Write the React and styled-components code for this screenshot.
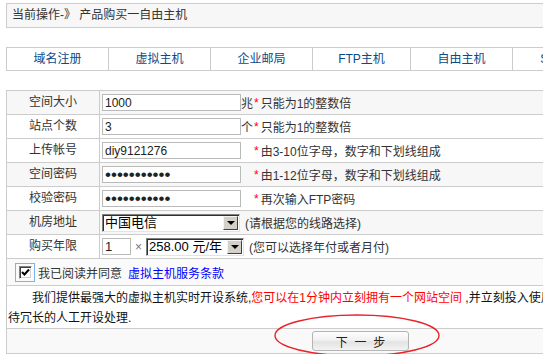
import React from 'react';
import styled, { createGlobalStyle } from 'styled-components';

const FONT = `"Liberation Sans", "Noto Sans CJK SC", sans-serif`;

const GlobalStyle = createGlobalStyle`
    html, body {
        margin: 0;
        padding: 0;
        overflow: hidden;
        background: #fff;
    }
    body {
        font-family: ${FONT};
        font-size: 12px;
        color: #333;
    }
`;

const tabs = [
    { name: '域名注册', width: 101 },
    { name: '虚拟主机', width: 102 },
    { name: '企业邮局', width: 102 },
    { name: 'FTP主机', width: 98 },
    { name: '自由主机', width: 102 },
    { name: 'SSL证书', width: 102 },
];

const fields = [
    { label: '空间大小', value: '1000', unit: '兆', hint: '只能为1的整数倍', shade: true },
    { label: '站点个数', value: '3', unit: '个', hint: '只能为1的整数倍' },
    { label: '上传帐号', value: 'diy9121276', hint: '由3-10位字母，数字和下划线组成' },
    { label: '空间密码', value: 'abcdefghijk', password: true, hint: '由1-12位字母，数字和下划线组成', shade: true },
    { label: '校验密码', value: 'abcdefghijk', password: true, hint: '再次输入FTP密码' },
];

function App() {
    const renderTabs = () => {
        return tabs.map((tab) => (
            <Tab key={tab.name} style={{ width: tab.width }}>{tab.name}</Tab>
        ));
    };
    const renderFields = () => {
        return fields.map((f) => (
            <Row key={f.label} $shade={f.shade}>
                <Label>{f.label}</Label>
                <Field>
                    <TextInput
                        type={f.password ? 'password' : 'text'}
                        value={f.value}
                        readOnly
                        $password={f.password}
                    />
                    <Unit>{f.unit}</Unit>
                    <Star>*</Star>
                    <Hint>{f.hint}</Hint>
                </Field>
            </Row>
        ));
    };
    return (
        <>
            <GlobalStyle />
            <Page>
                <Breadcrumb>当前操作-》 产品购买一自由主机</Breadcrumb>
                <TabBar>{renderTabs()}</TabBar>
                <FormBox>
                    {renderFields()}
                    <Row $shade>
                        <Label>机房地址</Label>
                        <Field>
                            <Select $width={138}>
                                <SelectText>中国电信</SelectText>
                                <Arrow />
                            </Select>
                            <Note>(请根据您的线路选择)</Note>
                        </Field>
                    </Row>
                    <Row>
                        <Label>购买年限</Label>
                        <Field>
                            <SmallInput type="text" value="1" readOnly />
                            <Times>×</Times>
                            <Select $width={98}>
                                <SelectText>258.00 元/年</SelectText>
                                <Arrow />
                            </Select>
                            <Note>(您可以选择年付或者月付)</Note>
                        </Field>
                    </Row>
                    <AgreeRow>
                        <CheckFocus>
                            <CheckBox>
                                <svg width="9" height="9" viewBox="0 0 9 9">
                                    <polyline points="1,4 3.5,6.5 8,1.5" fill="none" stroke="#000" strokeWidth="2" />
                                </svg>
                            </CheckBox>
                        </CheckFocus>
                        <span>我已阅读并同意</span>
                        <Terms>虚拟主机服务条款</Terms>
                    </AgreeRow>
                    <Intro>
                        我们提供最强大的虚拟主机实时开设系统,
                        <Red>您可以在1分钟内立刻拥有一个网站空间</Red> ,并立刻投入使用,无需等待冗长的人工开设处理.
                    </Intro>
                    <ButtonRow>
                        <NextButton type="button">下&nbsp;&nbsp;一&nbsp;&nbsp;步</NextButton>
                    </ButtonRow>
                </FormBox>
                <Circle width="170" height="46" viewBox="0 0 170 46">
                    <ellipse cx="84" cy="22.5" rx="82" ry="20.5" fill="none" stroke="#e8222a" strokeWidth="1.4" />
                </Circle>
            </Page>
        </>
    );
}

const Page = styled.div`
    position: relative;
    padding: 3px 6px 0;
    width: 700px;
`;
const Breadcrumb = styled.div`
    box-sizing: border-box;
    width: 612px;
    height: 25px;
    padding-left: 5px;
    line-height: 23px;
    border: 1px solid #cccccc;
    background: #f7f7f7;
    color: #333;
`;
const TabBar = styled.div`
    display: flex;
    box-sizing: border-box;
    width: 612px;
    height: 24px;
    margin-top: 19px;
    border: 1px solid #cccccc;
`;
const Tab = styled.div`
    box-sizing: border-box;
    flex: none;
    text-align: center;
    line-height: 22px;
    color: #0b4a89;
    border-left: 1px solid #cccccc;
    &:first-child {
        border-left: none;
    }
`;
const FormBox = styled.div`
    box-sizing: border-box;
    width: 594px;
    margin-top: 19px;
    border-top: 1px solid #cccccc;
    border-left: 1px solid #cccccc;
    border-right: 1px solid #cccccc;
`;
const Row = styled.div`
    display: flex;
    box-sizing: border-box;
    height: 24px;
    border-bottom: 1px solid #cccccc;
    background: ${(p) => (p.$shade ? '#f7f7f7' : '#ffffff')};
`;
const Label = styled.div`
    box-sizing: border-box;
    flex: none;
    width: 93px;
    border-right: 1px solid #cccccc;
    text-align: center;
    line-height: 23px;
    color: #333;
`;
const Field = styled.div`
    flex: 1;
    display: flex;
    align-items: center;
    padding-left: 2px;
    white-space: nowrap;
`;
const TextInput = styled.input`
    box-sizing: border-box;
    width: 139px;
    height: 17px;
    margin: 0;
    padding: 0 2px;
    border: 1px solid #bababa;
    background: #fff;
    font-family: ${FONT};
    font-size: ${(p) => (p.$password ? '17px' : '12px')};
    letter-spacing: 0;
    color: #222;
    outline: none;
`;
const Unit = styled.span`
    display: inline-block;
    width: 13px;
    color: #333;
`;
const Star = styled.span`
    color: #ff0000;
    margin-right: 2px;
`;
const Hint = styled.span`
    color: #333;
`;
const Select = styled.div`
    box-sizing: border-box;
    display: flex;
    align-items: center;
    justify-content: space-between;
    width: ${(p) => p.$width}px;
    height: 18px;
    border: 1px solid;
    border-color: #808080 #e4e4e4 #e4e4e4 #808080;
    box-shadow: inset 1px 1px 0 #303030;
    background: #fff;
    padding: 1px 1px 1px 2px;
`;
const SelectText = styled.span`
    font-size: 13px;
    color: #000;
    line-height: 14px;
`;
const Arrow = styled.span`
    position: relative;
    box-sizing: border-box;
    width: 15px;
    height: 14px;
    background: #d4d0c8;
    border: 1px solid;
    border-color: #f4f4f4 #404040 #404040 #f4f4f4;
    &::after {
        content: '';
        position: absolute;
        left: 3px;
        top: 4px;
        border-left: 4px solid transparent;
        border-right: 4px solid transparent;
        border-top: 4px solid #000;
    }
`;
const Note = styled.span`
    margin-left: 5px;
    color: #333;
`;
const SmallInput = styled(TextInput)`
    width: 29px;
    height: 17px;
    font-size: 13px;
`;
const Times = styled.span`
    margin: 0 4px;
    color: #777;
    font-size: 12px;
`;
const AgreeRow = styled.div`
    display: flex;
    align-items: center;
    box-sizing: border-box;
    height: 27px;
    padding-left: 8px;
    border-bottom: 1px solid #cccccc;
    background: #fafafa;
    color: #333;
`;
const CheckFocus = styled.span`
    box-sizing: border-box;
    display: inline-flex;
    align-items: center;
    justify-content: center;
    width: 20px;
    height: 19px;
    margin-right: 3px;
    border: 1px solid #7db3e8;
`;
const CheckBox = styled.span`
    box-sizing: border-box;
    display: inline-flex;
    align-items: center;
    justify-content: center;
    width: 13px;
    height: 13px;
    background: #fff;
    border: 1px solid;
    border-color: #808080 #ffffff #ffffff #808080;
    box-shadow: inset 1px 1px 0 #404040, inset -1px -1px 0 #d4d0c8;
`;
const Terms = styled.span`
    margin-left: 6px;
    color: #0000ff;
`;
const Intro = styled.div`
    box-sizing: border-box;
    height: 43px;
    padding: 2px 2px 0 1px;
    border-bottom: 1px solid #cccccc;
    text-indent: 24px;
    line-height: 20px;
    color: #111;
`;
const Red = styled.span`
    color: #ff0000;
`;
const ButtonRow = styled.div`
    display: flex;
    align-items: center;
    box-sizing: border-box;
    height: 25px;
    padding-left: 305px;
    border-bottom: 1px solid #cccccc;
    background: #f9f9f9;
`;
const NextButton = styled.button`
    box-sizing: border-box;
    width: 97px;
    height: 20px;
    margin: 0;
    padding: 0;
    border: 1px solid #b4b4b4;
    border-radius: 3px;
    background: linear-gradient(#fdfdfd 0%, #f1f1f1 45%, #e3e3e3 55%, #f3f3f3 100%);
    font-family: ${FONT};
    font-size: 12px;
    color: #222;
`;
const Circle = styled.svg`
    position: absolute;
    left: 273px;
    top: 313px;
    overflow: visible;
`;

export default App;
